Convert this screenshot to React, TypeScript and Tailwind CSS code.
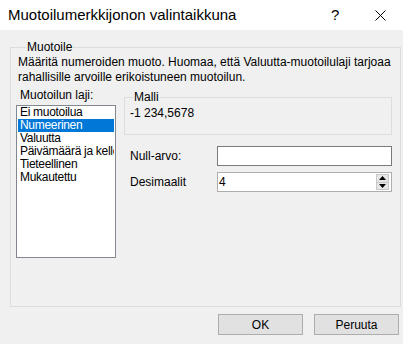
const kinds = [
  'Ei muotoilua',
  'Numeerinen',
  'Valuutta',
  'Päivämäärä ja kellonaika',
  'Tieteellinen',
  'Mukautettu',
]

function Arrow({ up }: { up?: boolean }) {
  return (
    <svg width="7" height="4" viewBox="0 0 7 4" className="block">
      {up ? <path d="M3.5 0 L7 4 L0 4 Z" fill="#000" /> : <path d="M0 0 L7 0 L3.5 4 Z" fill="#000" />}
    </svg>
  )
}

export default function App() {
  const selected = 1
  return (
    <div
      className="flex h-[344px] w-[403px] flex-col bg-[#f0f0f0] text-[12px] text-black"
      style={{ fontFamily: '"Liberation Sans", Arial, sans-serif' }}
    >
      <div className="flex h-[30px] shrink-0 items-center bg-white pl-[8px]">
        <span className="flex-1 text-[15px]">Muotoilumerkkijonon valintaikkuna</span>
        <span className="w-[26px] text-[15px]">?</span>
        <div className="flex w-[46px] items-center justify-center">
          <svg width="11" height="11" viewBox="0 0 11 11">
            <path d="M0.5 0.5 L10.5 10.5 M10.5 0.5 L0.5 10.5" stroke="#000" strokeWidth="1" />
          </svg>
        </div>
      </div>

      <fieldset className="mt-[9px] mr-[2px] ml-[10px] h-[268px] border border-[#dcdcdc] pr-[8px] pl-[7px]">
        <legend className="ml-[8px] px-[1px] leading-[16px]">Muotoile</legend>
        <p className="leading-[15px]">
          Määritä numeroiden muoto. Huomaa, että Valuutta-muotoilulaji tarjoaa
          <br />
          rahallisille arvoille erikoistuneen muotoilun.
        </p>

        <div className="mt-[1px] flex gap-[8px]">
          <div className="-ml-[2px] flex w-[100px] flex-col">
            <div className="pl-[4px] leading-[19px]">Muotoilun laji:</div>
            <ul className="h-[153px] overflow-hidden border border-[#828790] bg-white px-[1px]">
              {kinds.map((k, i) => (
                <li
                  key={k}
                  className={
                    i === selected
                      ? 'h-[13px] overflow-hidden pl-[2px] leading-[13px] tracking-[-0.3px] whitespace-nowrap bg-[#0078d7] text-white'
                      : 'h-[13px] overflow-hidden pl-[2px] leading-[13px] tracking-[-0.3px] whitespace-nowrap'
                  }
                >
                  {k}
                </li>
              ))}
            </ul>
          </div>

          <div className="flex flex-1 flex-col pt-[3px]">
            <fieldset className="h-[46px] border border-[#dcdcdc] px-[5px]">
              <legend className="ml-[3px] px-[1px] leading-[16px]">Malli</legend>
              <div className="leading-[16px]">-1 234,5678</div>
            </fieldset>

            <div className="mt-[11px] flex items-center">
              <span className="w-[93px] pl-[6px]">Null-arvo:</span>
              <div className="h-[20px] flex-1 border border-[#7a7a7a] bg-white" />
            </div>
            <div className="mt-[6px] flex items-center">
              <span className="w-[93px] pl-[6px]">Desimaalit</span>
              <div className="flex h-[20px] flex-1 items-center border border-[#adadad] bg-white pr-[2px] pl-[1px]">
                <span className="flex-1 leading-[18px]">4</span>
                <div className="flex h-[16px] w-[13px] flex-col">
                  <div className="flex flex-1 items-center justify-center border border-[#c8c8c8] bg-[#e6e6e6]">
                    <Arrow up />
                  </div>
                  <div className="flex flex-1 items-center justify-center border border-t-0 border-[#c8c8c8] bg-[#e6e6e6]">
                    <Arrow />
                  </div>
                </div>
              </div>
            </div>
          </div>
        </div>
      </fieldset>

      <div className="mt-[7px] flex justify-end gap-[11px] pr-[4px]">
        <button className="h-[21px] w-[85px] border border-[#adadad] bg-[#e1e1e1]">OK</button>
        <button className="h-[21px] w-[85px] border border-[#adadad] bg-[#e1e1e1]">Peruuta</button>
      </div>
    </div>
  )
}
